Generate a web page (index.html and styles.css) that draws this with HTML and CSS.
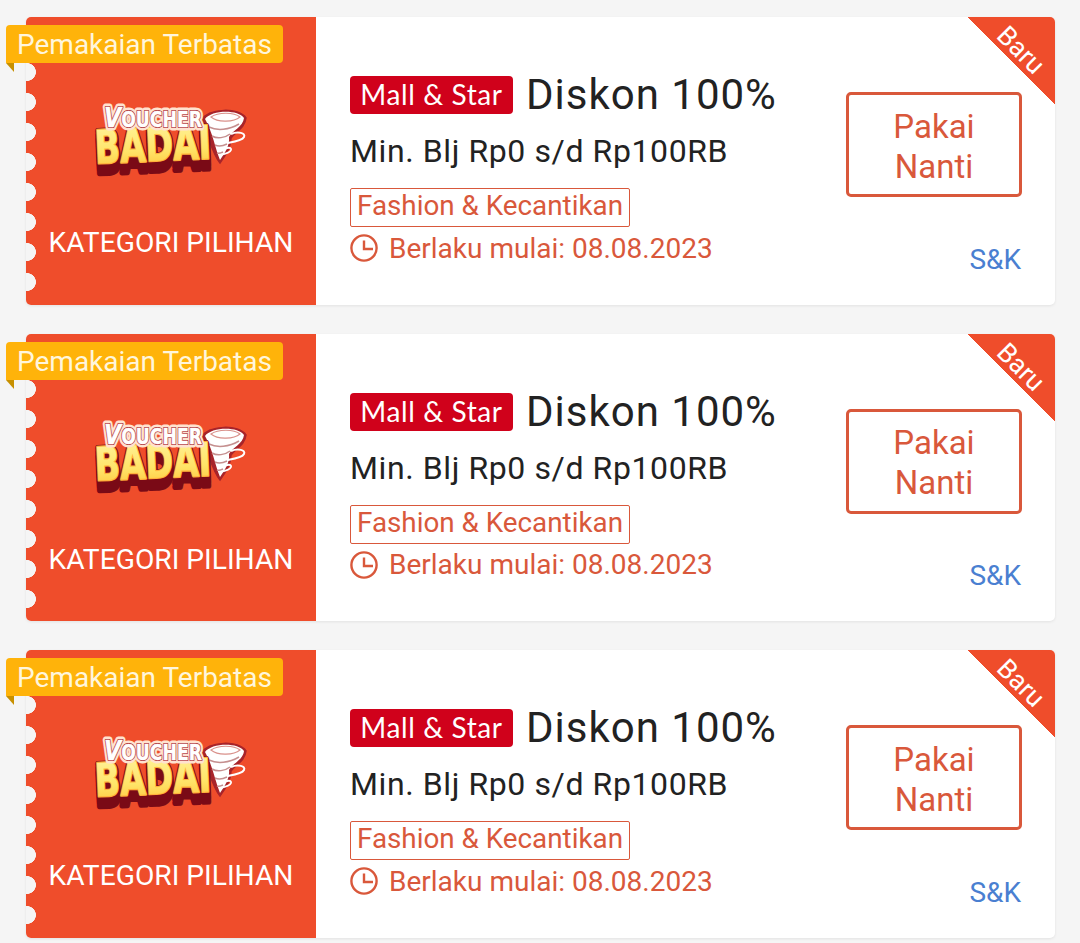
FILE: index.html
```html
<!DOCTYPE html>
<html lang="id">
<head>
<meta charset="utf-8">
<title>Voucher</title>
<link rel="stylesheet" href="styles.css">
</head>
<body>
<svg class="defs" width="0" height="0" aria-hidden="true">
  <defs>
    <linearGradient id="badaiFill" x1="0" y1="0" x2="0" y2="1">
      <stop offset="0" stop-color="#fff4a0"/>
      <stop offset="0.6" stop-color="#ffe468"/>
      <stop offset="1" stop-color="#ffc238"/>
    </linearGradient>
    <symbol id="logo" viewBox="0 0 154 74">
      <path d="M108 17 C116 5 146 4 153 15 C152 25 142 29 138 35 C138 44 133 52 127 60 C120 52 116 34 108 17Z" fill="#a8242a" stroke="#a8242a" stroke-width="1.5"/>
      <path d="M112 16 C118 7 145 6 151 15 C150 24 140 27 136 34 C137 42 132 50 127 57 C122 45 120 30 112 16Z" fill="#fff"/>
      <path d="M118 14 C125 9 141 9 147 14 C141 19 125 20 118 14Z" fill="#fff" stroke="#d9908a" stroke-width="1.2"/>
      <path d="M116 24 C124 28 136 27 146 21 M119 33 C124 36 132 35 137 31 M122 42 C126 44 130 43 134 41 M124 50 C126 51 128 50 130 49" fill="none" stroke="#c58f8f" stroke-width="1.5"/>
      <path d="M138 31 C145 28 153 30 151 34 C149 38 140 39 134 40" fill="none" stroke="#fff" stroke-width="2"/>
      <path d="M130 47 C134 44 139 44 138 47 C137 50 132 51 127 52" fill="none" stroke="#fff" stroke-width="1.8"/>
      <g transform="rotate(-2.5 60 45)">
        <text class="badai badai-depth" x="2" y="68" textLength="116" lengthAdjust="spacingAndGlyphs">BADAI</text>
        <text class="badai badai-depth" x="2" y="64" textLength="116" lengthAdjust="spacingAndGlyphs">BADAI</text>
        <text class="badai badai-depth" x="2" y="59" textLength="116" lengthAdjust="spacingAndGlyphs">BADAI</text>
        <text class="badai badai-rim" x="2" y="58" textLength="116" lengthAdjust="spacingAndGlyphs">BADAI</text>
        <text class="badai badai-main" x="2" y="58" textLength="116" lengthAdjust="spacingAndGlyphs">BADAI</text>
      </g>
      <text class="voucher voucher-outer" x="11" y="24" textLength="98" lengthAdjust="spacingAndGlyphs"><tspan class="voucher-v">V</tspan>OUCHER</text>
      <text class="voucher voucher-line" x="11" y="24" textLength="98" lengthAdjust="spacingAndGlyphs"><tspan class="voucher-v">V</tspan>OUCHER</text>
      <text class="voucher voucher-main" x="11" y="24" textLength="98" lengthAdjust="spacingAndGlyphs"><tspan class="voucher-v">V</tspan>OUCHER</text>
    </symbol>
    <symbol id="clock" viewBox="0 0 28 28">
      <circle cx="14" cy="14" r="12.6" fill="none" stroke="currentColor" stroke-width="2.4"/>
      <path d="M14 6.5V15H23" fill="none" stroke="currentColor" stroke-width="2.4"/>
    </symbol>
  </defs>
</svg>

<main class="list">
  <article class="card">
    <div class="ribbon">Pemakaian Terbatas</div>
    <div class="corner"><span class="corner-text">Baru</span></div>
    <div class="left">
      <svg class="logo" width="154" height="74"><use href="#logo"/></svg>
      <div class="category">KATEGORI PILIHAN</div>
    </div>
    <div class="mid">
      <div class="title-row"><span class="badge">Mall &amp; Star</span><span class="title">Diskon 100%</span></div>
      <div class="min">Min. Blj Rp0 s/d Rp100RB</div>
      <div class="tag">Fashion &amp; Kecantikan</div>
      <div class="date"><svg class="clock" width="28" height="28"><use href="#clock"/></svg><span>Berlaku mulai: 08.08.2023</span></div>
    </div>
    <div class="right">
      <div class="btn">Pakai<br>Nanti</div>
      <div class="terms">S&amp;K</div>
    </div>
  </article>
  <article class="card">
    <div class="ribbon">Pemakaian Terbatas</div>
    <div class="corner"><span class="corner-text">Baru</span></div>
    <div class="left">
      <svg class="logo" width="154" height="74"><use href="#logo"/></svg>
      <div class="category">KATEGORI PILIHAN</div>
    </div>
    <div class="mid">
      <div class="title-row"><span class="badge">Mall &amp; Star</span><span class="title">Diskon 100%</span></div>
      <div class="min">Min. Blj Rp0 s/d Rp100RB</div>
      <div class="tag">Fashion &amp; Kecantikan</div>
      <div class="date"><svg class="clock" width="28" height="28"><use href="#clock"/></svg><span>Berlaku mulai: 08.08.2023</span></div>
    </div>
    <div class="right">
      <div class="btn">Pakai<br>Nanti</div>
      <div class="terms">S&amp;K</div>
    </div>
  </article>
  <article class="card">
    <div class="ribbon">Pemakaian Terbatas</div>
    <div class="corner"><span class="corner-text">Baru</span></div>
    <div class="left">
      <svg class="logo" width="154" height="74"><use href="#logo"/></svg>
      <div class="category">KATEGORI PILIHAN</div>
    </div>
    <div class="mid">
      <div class="title-row"><span class="badge">Mall &amp; Star</span><span class="title">Diskon 100%</span></div>
      <div class="min">Min. Blj Rp0 s/d Rp100RB</div>
      <div class="tag">Fashion &amp; Kecantikan</div>
      <div class="date"><svg class="clock" width="28" height="28"><use href="#clock"/></svg><span>Berlaku mulai: 08.08.2023</span></div>
    </div>
    <div class="right">
      <div class="btn">Pakai<br>Nanti</div>
      <div class="terms">S&amp;K</div>
    </div>
  </article>
</main>
</body>
</html>
```
FILE: styles.css
```css
* { box-sizing: border-box; }
html, body { margin: 0; height: 943px; overflow: hidden; }
body { background: #f5f5f5; font-family: Roboto, "Liberation Sans", sans-serif; }
.defs { position: absolute; }
.list { display: flex; flex-direction: column; gap: 29px; padding: 17.3px 25px 0 26px; }
.card { position: relative; display: flex; height: 287.5px; background: #fff; border-radius: 5px; box-shadow: 0 1px 3px rgba(0,0,0,.08); }

.left { position: relative; width: 290px; flex: none; display: flex; flex-direction: column; align-items: center; background: #ef4d2b; border-radius: 5px 0 0 5px; padding: 86px 0 0 0; color: #fff; }
.left::before { content: ""; position: absolute; left: 0; top: 40px; width: 11px; height: 240px; background: radial-gradient(circle at 1px 15px, #f5f5f5 8.6px, transparent 9.2px) 0 0 / 11px 30px repeat-y; }
.logo { display: block; margin-right: 2px; flex: none; }
.category { margin-top: 49px; font-size: 28.2px; line-height: 34px; white-space: nowrap; }

.ribbon { position: absolute; z-index: 2; left: -20px; top: 8px; height: 38px; padding: 0 11px; background: #ffb30a; color: #fff6dc; border-radius: 4px 4px 4px 0; font-size: 28px; line-height: 39px; white-space: nowrap; }
.ribbon::after { content: ""; position: absolute; left: 0; top: 38px; border-style: solid; border-width: 0 8px 9px 0; border-color: transparent #c79000 transparent transparent; }

.corner { position: absolute; z-index: 2; right: 0; top: 0; width: 88px; height: 88px; background: linear-gradient(45deg, transparent 50%, #ef4d2b 50.4%); border-top-right-radius: 5px; }
.corner-text { position: absolute; left: 24px; top: 18px; width: 60px; text-align: center; color: #fff; font-size: 26.5px; line-height: 30px; transform: rotate(45deg); }

.mid { flex: 1; padding: 59px 0 0 34px; min-width: 0; }
.title-row { display: flex; align-items: center; height: 38px; gap: 13px; }
.badge { display: block; flex: none; width: 163px; height: 38px; background: #d0011b; color: #fff; border-radius: 4px; text-align: center; font-family: Lato, Roboto, sans-serif; font-size: 28px; letter-spacing: .6px; line-height: 37px; white-space: nowrap; }
.title { color: #222; font-size: 42px; letter-spacing: 1px; line-height: 38px; white-space: nowrap; }
.min { margin-top: 17px; color: #222; font-size: 32px; letter-spacing: .6px; line-height: 40px; white-space: nowrap; }
.tag { display: inline-block; margin-top: 17px; height: 39px; padding: 0 6px; border: 1.5px solid #d9583b; border-radius: 2px; color: #d9583b; font-size: 27.8px; line-height: 34px; white-space: nowrap; }
.date { display: flex; align-items: center; gap: 11px; height: 40px; margin-top: 1px; color: #d9583b; font-size: 28px; white-space: nowrap; }
.clock { display: block; flex: none; }

.right { position: relative; width: 209px; flex: none; padding: 75px 33px 0 0; display: flex; flex-direction: column; align-items: stretch; }
.btn { height: 105px; border: 3px solid #d9583b; border-radius: 5px; color: #d9583b; text-align: center; font-size: 33px; line-height: 40px; padding-top: 11.5px; }
.terms { margin-top: 44.5px; text-align: right; padding-right: 1px; color: #4a7fd1; font-size: 28px; line-height: 36px; }

.badai { font-family: "DejaVu Sans", "Liberation Sans", sans-serif; font-weight: 700; font-size: 46px; stroke-linejoin: round; }
.badai-depth { fill: #7a0a16; stroke: #7a0a16; stroke-width: 6px; }
.badai-rim { fill: #ff9e2c; stroke: #ffb13c; stroke-width: 2.5px; }
.badai-main { fill: url(#badaiFill); }
.voucher { font-family: "DejaVu Sans", "Liberation Sans", sans-serif; font-weight: 700; font-size: 21px; stroke-linejoin: round; }
.voucher-outer { fill: #ffe9d8; stroke: #ffe2cf; stroke-width: 7px; }
.voucher-line { fill: #8f1420; stroke: #a8242a; stroke-width: 2px; }
.voucher-main { fill: #fff; stroke: #fff; stroke-width: .5px; }
.voucher-v { font-size: 27px; font-style: italic; }
```
